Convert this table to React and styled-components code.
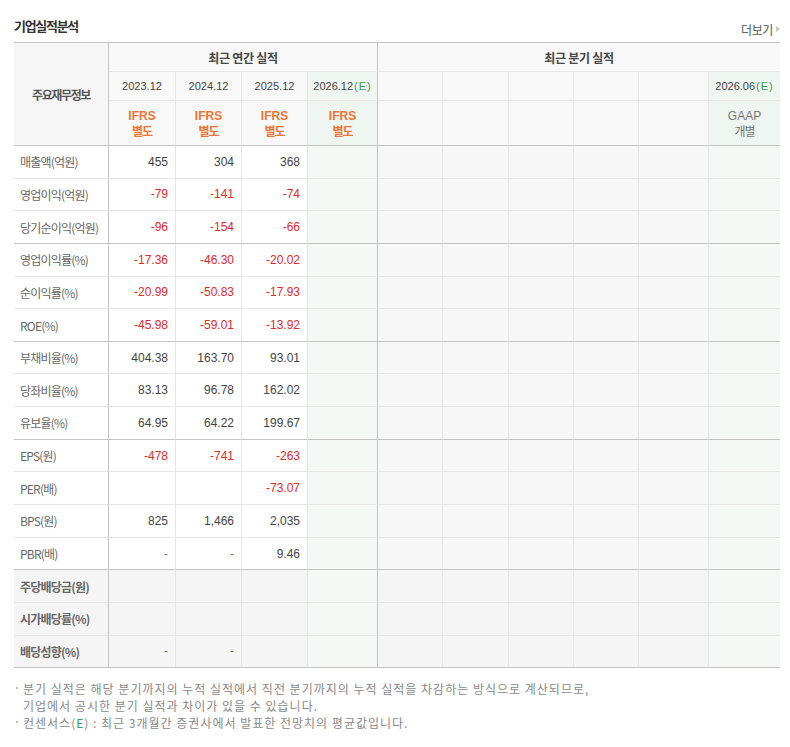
import React from "react";
import styled, { createGlobalStyle } from "styled-components";

const Global = createGlobalStyle`
  html, body { margin: 0; padding: 0; background: #fff; }
  body { font-family: "Noto Sans CJK KR", "Liberation Sans", sans-serif; }
  * { box-sizing: border-box; }
`;

const Wrap = styled.div`
  width: 790px;
  padding: 18px 10px 0 14px;
`;

const TitleBar = styled.div`
  width: 766px;
  height: 20px;
  margin-bottom: 4px;
  display: flex;
  justify-content: space-between;
`;

const Title = styled.h2`
  margin: 0;
  align-self: flex-start;
  font-size: 13px;
  line-height: 16px;
  font-weight: 700;
  color: #333;
  letter-spacing: -1.3px;
`;

const More = styled.a`
  align-self: flex-end;
  display: flex;
  align-items: center;
  gap: 3px;
  font-size: 12px;
  line-height: 16px;
  color: #555;
  letter-spacing: -0.4px;
  text-decoration: none;
`;

const Tri = styled.span`
  width: 0;
  height: 0;
  border-top: 3px solid transparent;
  border-bottom: 3px solid transparent;
  border-left: 4px solid #c8c8c8;
  margin-top: -2px;
`;

const Grid = styled.div`
  width: 766px;
  display: grid;
  grid-template-columns: 95px 67px 66px 66px 70px 65px 66px 65px 65px 70px 71px;
  grid-template-rows: 29px 29px 45px;
  grid-auto-rows: 32.65px;
  border-top: 1px solid #c4c4c4;
`;

const LIGHT = "#e6e6e6";
const DARK = "#c4c4c4";

const Cell = styled.div`
  display: flex;
  align-items: center;
  justify-content: ${(p) => (p.$align === "left" ? "flex-start" : p.$align === "right" ? "flex-end" : "center")};
  padding: ${(p) => (p.$align === "left" ? "0 0 0 6px" : p.$align === "right" ? "0 7px 0 0" : "0")};
  background: ${(p) => p.$bg || "#fff"};
  border-right: ${(p) => (p.$right === "none" ? "0" : `1px solid ${p.$right === "dark" ? DARK : LIGHT}`)};
  border-bottom: 1px solid ${(p) => (p.$bottom === "dark" ? DARK : LIGHT)};
  grid-column: ${(p) => p.$col || "auto"};
  grid-row: ${(p) => p.$row || "auto"};
  min-width: 0;
`;

const GroupHead = styled.span`
  font-size: 12px;
  font-weight: 700;
  color: #444;
  letter-spacing: -0.3px;
`;

const CornerHead = styled.span`
  font-size: 12px;
  font-weight: 700;
  color: #555;
  letter-spacing: -1.4px;
`;

const Year = styled.span`
  font-family: "Liberation Sans", sans-serif;
  font-size: 11px;
  color: #444;
  white-space: nowrap;
`;

const Est = styled.span`
  color: #3d9a5c;
  letter-spacing: 1px;
  margin-left: 1px;
`;

const Standard = styled.span`
  font-family: "Liberation Sans", "Noto Sans CJK KR", sans-serif;
  font-size: 12px;
  line-height: 15px;
  font-weight: ${(p) => (p.$muted ? 400 : 700)};
  color: ${(p) => (p.$muted ? "#777" : "#ee7533")};
  text-align: center;
  display: flex;
  flex-direction: column;
  align-items: center;
`;

const Kor = styled.span`
  font-family: "Noto Sans CJK KR", sans-serif;
  letter-spacing: -1px;
  line-height: 14px;
`;

const Label = styled.span`
  font-size: 12px;
  color: #666;
  font-weight: ${(p) => (p.$strong ? 700 : 400)};
  letter-spacing: -0.8px;
  white-space: nowrap;
`;

const Num = styled.span`
  font-family: "Liberation Sans", sans-serif;
  font-size: 12px;
  color: ${(p) => (p.$neg ? "#e02a2a" : p.$dash ? "#777" : "#444")};
`;

const Notes = styled.ul`
  list-style: none;
  margin: 12px 0 0;
  padding: 0;
`;

const Note = styled.li`
  position: relative;
  padding-left: 9px;
  font-size: 12px;
  line-height: 17px;
  color: #888;
  letter-spacing: 1px;
  &::before {
    content: "";
    position: absolute;
    left: 2px;
    top: 7px;
    width: 2px;
    height: 2px;
    background: #bbb;
  }
`;

const Green = styled.span`
  color: #3d9a5c;
`;

const HEAD_BG = "#f8f8f8";
const HEAD_E = "#eff5f0";
const E_BG = "#f5f9f6";
const Q_BG = "#f7f7f7";
const DIV_BG = "#f5f5f5";

const rows = [
  { label: "매출액(억원)", v: ["455", "304", "368"] },
  { label: "영업이익(억원)", v: ["-79", "-141", "-74"] },
  { label: "당기순이익(억원)", v: ["-96", "-154", "-66"], end: true },
  { label: "영업이익률(%)", v: ["-17.36", "-46.30", "-20.02"] },
  { label: "순이익률(%)", v: ["-20.99", "-50.83", "-17.93"] },
  { label: "ROE(%)", v: ["-45.98", "-59.01", "-13.92"], end: true },
  { label: "부채비율(%)", v: ["404.38", "163.70", "93.01"] },
  { label: "당좌비율(%)", v: ["83.13", "96.78", "162.02"] },
  { label: "유보율(%)", v: ["64.95", "64.22", "199.67"], end: true },
  { label: "EPS(원)", v: ["-478", "-741", "-263"] },
  { label: "PER(배)", v: ["", "", "-73.07"] },
  { label: "BPS(원)", v: ["825", "1,466", "2,035"] },
  { label: "PBR(배)", v: ["-", "-", "9.46"], end: true },
  { label: "주당배당금(원)", v: ["", "", ""], div: true },
  { label: "시가배당률(%)", v: ["", "", ""], div: true },
  { label: "배당성향(%)", v: ["-", "-", ""], div: true, end: true },
];

const years = ["2023.12", "2024.12", "2025.12"];

function rightOf(i) {
  if (i === 0 || i === 4) return "dark";
  if (i === 10) return "none";
  return "light";
}

function bgOf(i, div) {
  if (i === 4 || i === 10) return E_BG;
  if (i >= 5) return div ? DIV_BG : Q_BG;
  return div ? DIV_BG : "#fff";
}

function NumText({ value }) {
  if (!value) return null;
  const neg = value.startsWith("-") && value.length > 1;
  const dash = value === "-";
  return (
    <Num $neg={neg} $dash={dash}>
      {value}
    </Num>
  );
}

function Std({ en, ko, muted }) {
  return (
    <Standard $muted={muted}>
      <span>{en}</span>
      <Kor>{ko}</Kor>
    </Standard>
  );
}

export default function App() {
  return (
    <>
      <Global />
      <Wrap>
        <TitleBar>
          <Title>기업실적분석</Title>
          <More href="#">
            더보기
            <Tri />
          </More>
        </TitleBar>
        <Grid>
          <Cell $row="1 / span 3" $col="1" $bg="#f6f6f6" $right="dark" $bottom="dark">
            <CornerHead>주요재무정보</CornerHead>
          </Cell>
          <Cell $col="2 / span 4" $bg={HEAD_BG} $right="dark">
            <GroupHead>최근 연간 실적</GroupHead>
          </Cell>
          <Cell $col="6 / span 6" $bg={HEAD_BG} $right="none">
            <GroupHead>최근 분기 실적</GroupHead>
          </Cell>

          {years.map((y) => (
            <Cell key={y} $bg={HEAD_BG}>
              <Year>{y}</Year>
            </Cell>
          ))}
          <Cell $bg={HEAD_E} $right="dark">
            <Year>
              2026.12<Est>(E)</Est>
            </Year>
          </Cell>
          {[0, 1, 2, 3, 4].map((k) => (
            <Cell key={"yq" + k} $bg={HEAD_BG} />
          ))}
          <Cell $bg={HEAD_E} $right="none">
            <Year>
              2026.06<Est>(E)</Est>
            </Year>
          </Cell>

          {[0, 1, 2].map((k) => (
            <Cell key={"ifrs" + k} $bg={HEAD_BG} $bottom="dark">
              <Std en="IFRS" ko="별도" />
            </Cell>
          ))}
          <Cell $bg={HEAD_E} $right="dark" $bottom="dark">
            <Std en="IFRS" ko="별도" />
          </Cell>
          {[0, 1, 2, 3, 4].map((k) => (
            <Cell key={"sq" + k} $bg={HEAD_BG} $bottom="dark" />
          ))}
          <Cell $bg={HEAD_E} $right="none" $bottom="dark">
            <Std en="GAAP" ko="개별" muted />
          </Cell>

          {rows.map((r) =>
            Array.from({ length: 11 }).map((_, i) => {
              const bottom = r.end ? "dark" : "light";
              if (i === 0) {
                return (
                  <Cell key={r.label + i} $align="left" $bg={r.div ? DIV_BG : "#fff"} $right="dark" $bottom={bottom}>
                    <Label $strong={r.div}>{r.label}</Label>
                  </Cell>
                );
              }
              return (
                <Cell
                  key={r.label + i}
                  $align="right"
                  $bg={bgOf(i, r.div)}
                  $right={rightOf(i)}
                  $bottom={bottom}
                >
                  {i <= 3 ? <NumText value={r.v[i - 1]} /> : null}
                </Cell>
              );
            })
          )}
        </Grid>
        <Notes>
          <Note>
            분기 실적은 해당 분기까지의 누적 실적에서 직전 분기까지의 누적 실적을 차감하는 방식으로 계산되므로,
            <br />
            기업에서 공시한 분기 실적과 차이가 있을 수 있습니다.
          </Note>
          <Note>
            컨센서스(<Green>E</Green>) : 최근 3개월간 증권사에서 발표한 전망치의 평균값입니다.
          </Note>
        </Notes>
      </Wrap>
    </>
  );
}
